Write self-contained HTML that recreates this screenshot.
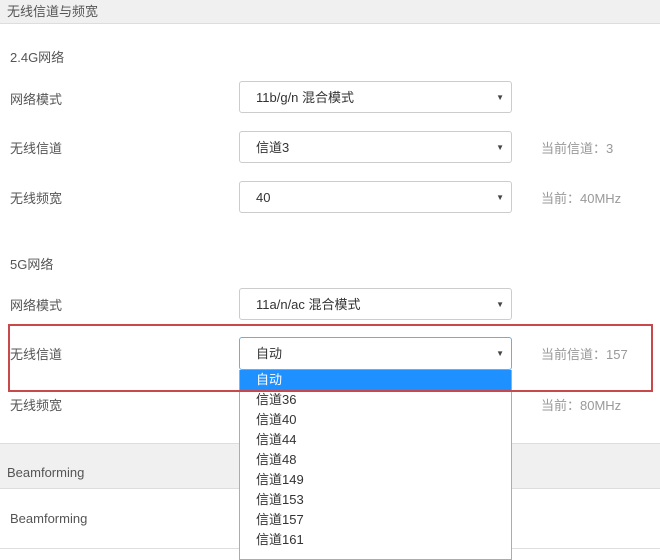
<!DOCTYPE html><html><head><meta charset="utf-8"><style>
body{margin:0;width:660px;height:551px;overflow:hidden;background:#fff;font-family:"Liberation Sans","Noto Sans CJK SC",sans-serif;font-size:13px;color:#555;position:relative}
.a{position:absolute;white-space:nowrap}
.sel{position:absolute;left:239px;width:273px;height:32px;border:1px solid #ccc;border-radius:3px;background:#fff;box-sizing:border-box;padding-left:16px;line-height:32px;color:#333}
.sel:after{content:"▼";position:absolute;right:7px;top:0;font-size:8px;color:#444}
.r{color:#999}
</style></head><body>
<div class="a" style="left:0;top:0;width:660px;height:23px;background:#f0f0f0;border-bottom:1px solid #ddd"></div>
<div class="a" style="left:7px;top:1px">无线信道与频宽</div>
<div class="a" style="left:10px;top:47px">2.4G网络</div>
<div class="a" style="left:10px;top:89px">网络模式</div>
<div class="sel" style="top:81px">11b/g/n 混合模式</div>
<div class="a" style="left:10px;top:138px">无线信道</div>
<div class="sel" style="top:131px">信道3</div>
<div class="a r" style="left:541px;top:138px">当前信道：3</div>
<div class="a" style="left:10px;top:188px">无线频宽</div>
<div class="sel" style="top:181px">40</div>
<div class="a r" style="left:541px;top:188px">当前：40MHz</div>
<div class="a" style="left:10px;top:254px">5G网络</div>
<div class="a" style="left:10px;top:295px">网络模式</div>
<div class="sel" style="top:288px">11a/n/ac 混合模式</div>
<div class="a" style="left:10px;top:344px">无线信道</div>
<div class="sel" style="top:337px;border-color:#66afe9;height:33px">自动</div>
<div class="a r" style="left:541px;top:344px">当前信道：157</div>
<div class="a" style="left:10px;top:395px">无线频宽</div>
<div class="a r" style="left:541px;top:395px">当前：80MHz</div>
<div class="a" style="left:0;top:443px;width:660px;height:44px;background:#f0f0f0;border-top:1px solid #ddd;border-bottom:1px solid #ddd"></div>
<div class="a" style="left:7px;top:465px">Beamforming</div>
<div class="a" style="left:10px;top:511px">Beamforming</div>
<div class="a" style="left:0;top:548px;width:660px;height:1px;background:#ddd"></div>
<div class="a" style="left:239px;top:370px;width:273px;height:190px;background:#fff;border:1px solid #aab;border-top:none;box-sizing:border-box;line-height:20px;color:#333">
<div style="background:#1e90ff;color:#fff;padding-left:16px">自动</div>
<div style="padding-left:16px">信道36</div><div style="padding-left:16px">信道40</div><div style="padding-left:16px">信道44</div><div style="padding-left:16px">信道48</div><div style="padding-left:16px">信道149</div><div style="padding-left:16px">信道153</div><div style="padding-left:16px">信道157</div><div style="padding-left:16px">信道161</div>
</div>
<div class="a" style="left:8px;top:324px;width:645px;height:68px;border:2px solid #c9484b;box-sizing:border-box"></div>
</body></html>
